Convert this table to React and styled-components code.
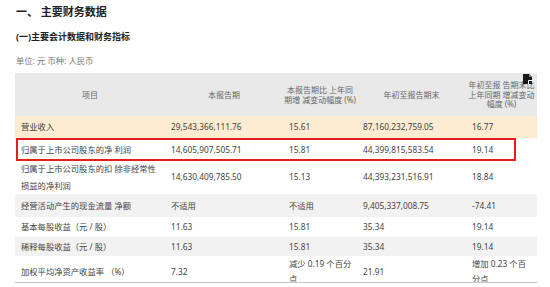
import React from 'react'
import styled, { createGlobalStyle } from 'styled-components'

const GlobalStyle = createGlobalStyle`
  html, body {
    margin: 0;
    padding: 0;
    background: #fff;
  }
  body {
    font-family: "Noto Sans", "Noto Sans CJK SC", sans-serif;
    color: #333;
  }
`

const Page = styled.div`
  width: 550px;
  height: 287px;
  overflow: hidden;
  padding: 0 0 0 15px;
  box-sizing: border-box;
`

const Title = styled.h1`
  margin: 0;
  padding: 4px 0 0 1px;
  font-size: 11px;
  line-height: 16px;
  font-weight: 700;
  color: #222;
`

const SubTitle = styled.h2`
  margin: 10px 0 0;
  padding-left: 1px;
  font-size: 9px;
  line-height: 14px;
  font-weight: 700;
  color: #222;
`

const Unit = styled.div`
  margin-top: 11px;
  padding-left: 1px;
  font-size: 8.3px;
  line-height: 12px;
  color: #777;
`

const TableArea = styled.div`
  position: relative;
  margin-top: 6px;
  width: 522px;
  height: 209px;
  overflow: hidden;
  border-bottom: 1px solid #c8c8c8;
`

const Table = styled.table`
  width: 522px;
  border-collapse: collapse;
  table-layout: fixed;
  font-size: 8.3px;
`

const Head = styled.th`
  height: 43px;
  padding: 0;
  background: #e9e9e9;
  color: #666;
  font-weight: 400;
  font-size: 8px;
  line-height: 9.5px;
  text-align: center;
  white-space: nowrap;
  vertical-align: middle;
`

const Row = styled.tr`
  background: ${p => (p.$tone === 'orange' ? '#fdebd2' : p.$tone === 'gray' ? '#f2f2f2' : '#fff')};
`

const Cell = styled.td`
  position: relative;
  height: ${p => p.$h || 22}px;
  padding: 0 6px;
  color: #444;
  line-height: ${p => p.$lh || 16}px;
  vertical-align: middle;
  white-space: ${p => (p.$wrap ? 'pre' : 'nowrap')};
`

const RedMark = styled.span`
  position: absolute;
  top: 0;
  left: 1px;
  width: 500px;
  height: 100%;
  box-sizing: border-box;
  border: 2px solid #e41d1d;
  pointer-events: none;
`

const CornerIcon = styled.svg`
  position: absolute;
  top: 1px;
  right: 4px;
  width: 11px;
  height: 11px;
`

const cols = [150, 118, 74, 109, 71]

const rows = [
  { tone: 'orange', h: 22, cells: ['营业收入', '29,543,366,111.76', '15.61', '87,160,232,759.05', '16.77'] },
  { marked: true, h: 23, cells: ['归属于上市公司股东的净 利润', '14,605,907,505.71', '15.81', '44,399,815,583.54', '19.14'] },
  { h: 32, lh: 16.5, cells: ['归属于上市公司股东的扣 除非经常性\n损益的净利润', '14,630,409,785.50', '15.13', '44,393,231,516.91', '18.84'] },
  { tone: 'gray', h: 23, cells: ['经营活动产生的现金流量 净额', '不适用', '不适用', '9,405,337,008.75', '-74.41'] },
  { h: 20, cells: ['基本每股收益（元 / 股）', '11.63', '15.81', '35.34', '19.14'] },
  { tone: 'gray', h: 19, cells: ['稀释每股收益（元 / 股）', '11.63', '15.81', '35.34', '19.14'] },
  { h: 30, lh: 15, cells: ['加权平均净资产收益率 （%）', '7.32', '减少 0.19 个百分\n点', '21.91', '增加 0.23 个百\n分点'] },
]

function App() {
  return (
    <Page>
      <GlobalStyle />
      <Title>一、 主要财务数据</Title>
      <SubTitle>(一)主要会计数据和财务指标</SubTitle>
      <Unit>单位: 元 币种: 人民币</Unit>
      <TableArea>
        <Table>
          <colgroup>
            {cols.map((w, i) => <col key={i} style={{ width: w }} />)}
          </colgroup>
          <thead>
            <tr>
              <Head>项目</Head>
              <Head>本报告期</Head>
              <Head>本报告期比 上年同<br />期增 减变动幅度 (%)</Head>
              <Head>年初至报告期末</Head>
              <Head>年初至报 告期末比<br />上年同期 增减变动<br />幅度 (%)</Head>
            </tr>
          </thead>
          <tbody>
            {rows.map((r, i) => (
              <Row key={i} $tone={r.tone}>
                {r.cells.map((c, j) => (
                  <Cell key={j} $h={r.h} $lh={r.lh} $wrap={j === 0 || j === 2 || j === 4}>
                    {r.marked && j === 0 && <RedMark />}
                    {c}
                  </Cell>
                ))}
              </Row>
            ))}
          </tbody>
        </Table>
        <CornerIcon viewBox="0 0 11 11">
          <path d="M1 0h6l3 3v7H1z" fill="#1a1a1a" />
          <path d="M7 0v3h3" fill="#888" />
          <path d="M6 6h4v4H6z" fill="#fff" />
          <path d="M7 7h3v3H7z" fill="#1a1a1a" />
        </CornerIcon>
      </TableArea>
    </Page>
  )
}

export default App
